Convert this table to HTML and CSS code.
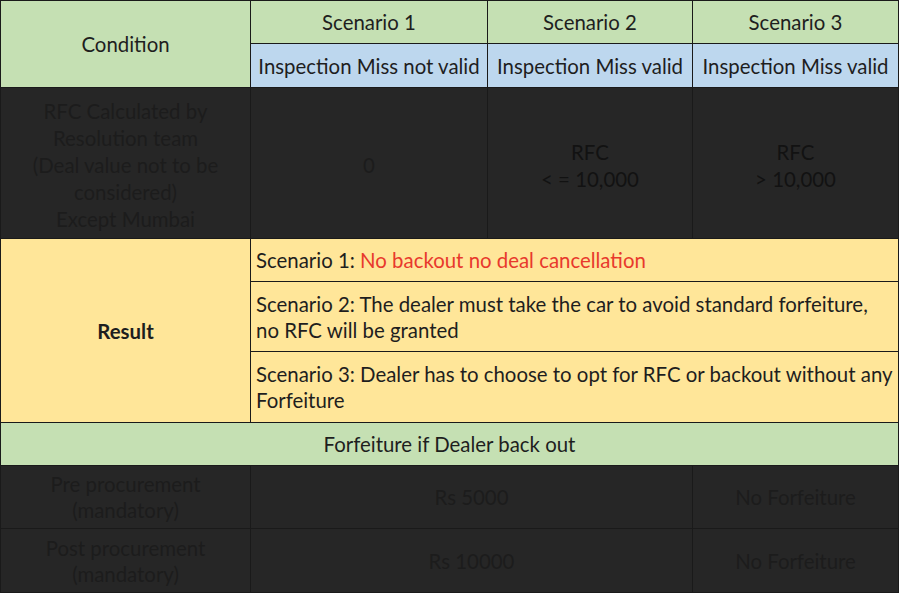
FILE: index.html
```html
<!DOCTYPE html>
<html>
<head>
<meta charset="utf-8">
<link rel="stylesheet" href="styles.css">
</head>
<body>
<table class="grid">
  <colgroup>
    <col class="c1"><col class="c2"><col class="c3"><col class="c4">
  </colgroup>
  <tr class="h-top">
    <td rowspan="2" class="green">Condition</td>
    <td class="green">Scenario 1</td>
    <td class="green">Scenario 2</td>
    <td class="green">Scenario 3</td>
  </tr>
  <tr class="h-sub">
    <td class="blue">Inspection Miss not valid</td>
    <td class="blue">Inspection Miss valid</td>
    <td class="blue">Inspection Miss valid</td>
  </tr>
  <tr class="r-dark">
    <td class="dark faint tall">RFC Calculated by<br>Resolution team<br>(Deal value not to be<br>considered)<br>Except Mumbai</td>
    <td class="dark faint tall">0</td>
    <td class="dark tall">RFC<br>&lt; = 10,000</td>
    <td class="dark tall">RFC<br>&gt; 10,000</td>
  </tr>
  <tr class="r-res1">
    <td rowspan="3" class="yellow bold">Result</td>
    <td colspan="3" class="yellow left">Scenario 1: <span class="red">No backout no deal cancellation</span></td>
  </tr>
  <tr class="r-res2">
    <td colspan="3" class="yellow left">Scenario 2: The dealer must take the car to avoid standard forfeiture, no RFC will be granted</td>
  </tr>
  <tr class="r-res3">
    <td colspan="3" class="yellow left">Scenario 3: Dealer has to choose to opt for RFC or backout without any Forfeiture</td>
  </tr>
  <tr class="r-forf">
    <td colspan="4" class="green">Forfeiture if Dealer back out</td>
  </tr>
  <tr class="r-pre">
    <td class="dark faint">Pre procurement<br>(mandatory)</td>
    <td colspan="2" class="dark faint">Rs 5000</td>
    <td class="dark faint">No Forfeiture</td>
  </tr>
  <tr class="r-post">
    <td class="dark faint">Post procurement<br>(mandatory)</td>
    <td colspan="2" class="dark faint">Rs 10000</td>
    <td class="dark faint">No Forfeiture</td>
  </tr>
</table>
</body>
</html>
```

FILE: styles.css
```css
html, body {
  margin: 0;
  padding: 0;
  background: #ffffff;
}

.grid {
  border-collapse: collapse;
  table-layout: fixed;
  width: 898px;
  font-family: Lato, "Open Sans", sans-serif;
  font-size: 20.4px;
  line-height: 26px;
  color: #1e1e1e;
}

.c1 { width: 250px; }
.c2 { width: 237px; }
.c3 { width: 205px; }
.c4 { width: 206px; }

.grid td {
  border: 1.5px solid #1a1a1a;
  text-align: center;
  vertical-align: middle;
  padding: 0 4px;
  overflow: hidden;
  white-space: normal;
}

.grid td.tall {
  line-height: 27px;
  padding-top: 5px;
}

.h-top { height: 43px; }
.h-sub { height: 44px; }
.r-dark { height: 151px; }
.r-res1 { height: 43px; }
.r-res2 { height: 70px; }
.r-res3 { height: 71px; }
.r-forf { height: 43px; }
.r-pre { height: 63px; }
.r-post { height: 64px; }

.green { background: #c5e0b3; }
.blue { background: #bdd7ee; }
.yellow { background: #ffe699; }
.dark { background: #262626; color: #121212; }
.dark.faint { color: #1c1c1c; }

.bold { font-weight: 700; }
.left { text-align: left !important; padding-left: 5px !important; }
.red { color: #e8392c; }
```
